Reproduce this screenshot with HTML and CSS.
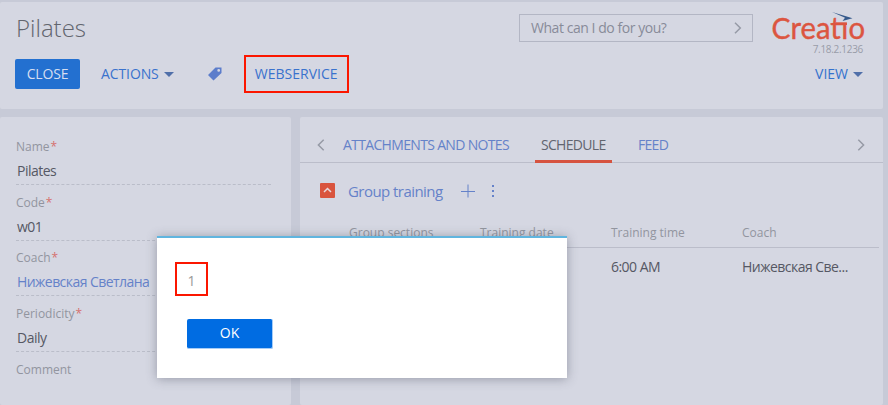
FILE: index.html
```html
<!DOCTYPE html>
<html lang="en">
<head>
<meta charset="utf-8">
<title>Pilates</title>
<link rel="stylesheet" href="styles.css">
</head>
<body>
<header class="header panel">
  <div class="header-main">
    <h1>Pilates</h1>
    <div class="toolbar">
      <button class="close">CLOSE</button>
      <a class="action actions"><span>ACTIONS</span><i class="caret"></i></a>
      <svg class="tag" width="14" height="14" viewBox="0 0 14 14"><path fill-rule="evenodd" d="M7.5 0.5H13.5V6L5.5 13.6L0 8Z M10.7 2A1.4 1.4 0 1 0 10.7 4.8A1.4 1.4 0 1 0 10.7 2Z"/></svg>
      <a class="webservice"><span>WEBSERVICE</span></a>
    </div>
  </div>
  <div class="search"><span>What can I do for you?</span><svg width="8" height="12" viewBox="0 0 8 12"><path d="M1 .7L6.3 6L1 11.3"/></svg></div>
  <div class="brand">
    <svg class="logo" width="96" height="32" viewBox="0 0 96 32"><text x="1.5" y="28.7" textLength="93.5" lengthAdjust="spacingAndGlyphs">C<tspan class="lower">reatıo</tspan></text><path class="bar" d="M66 13.7H77"/><path class="arrow" d="M62 2L82.5 8.3L72.5 11L75 7.8Z"/></svg>
    <span class="version">7.18.2.1236</span>
    <a class="action view"><span>VIEW</span><i class="caret"></i></a>
  </div>
</header>
<main>
  <section class="fields panel">
    <div class="field"><label><span>Name</span><b>*</b></label><p><span>Pilates</span></p></div>
    <div class="field"><label><span>Code</span><b>*</b></label><p><span>w01</span></p></div>
    <div class="field"><label><span>Coach</span><b>*</b></label><p class="link"><span>Нижевская Светлана</span></p></div>
    <div class="field"><label><span>Periodicity</span><b>*</b></label><p><span>Daily</span></p></div>
    <div class="field"><label><span>Comment</span></label></div>
  </section>
  <section class="details panel">
    <nav>
      <svg class="prev" width="8" height="12" viewBox="0 0 8 12"><path d="M6.7 .7L1.4 6L6.7 11.3"/></svg>
      <a class="tab attachments">ATTACHMENTS AND NOTES</a>
      <a class="tab active">SCHEDULE</a>
      <a class="tab">FEED</a>
      <svg class="next" width="8" height="12" viewBox="0 0 8 12"><path d="M1.3 .7L6.6 6L1.3 11.3"/></svg>
    </nav>
    <div class="group">
      <svg class="toggle" width="15" height="15" viewBox="0 0 15 15"><rect width="15" height="15" rx="1"/><path d="M4 9L7.5 5.5L11 9"/></svg>
      <h2>Group training</h2>
      <svg class="plus" width="14" height="14" viewBox="0 0 14 14"><path d="M0 7.5H14M7 .5V13.5"/></svg>
      <svg class="dots" width="4" height="14" viewBox="0 0 4 14"><path d="M1 1h2v2H1zM1 6h2v2H1zM1 11h2v2H1z"/></svg>
    </div>
    <div class="row head"><span>Group sections</span><span>Training date</span><span>Training time</span><span>Coach</span></div>
    <div class="row"><span></span><span></span><span>6:00 AM</span><span>Нижевская Све...</span></div>
  </section>
</main>
<div class="dialog">
  <div class="message"><span>1</span></div>
  <button class="ok">OK</button>
</div>
</body>
</html>
```

FILE: styles.css
```css
* { box-sizing: border-box; }
body {
  margin: 0;
  width: 888px;
  height: 405px;
  overflow: hidden;
  padding-top: 2px;
  background: #c7cad7;
  font: 14px/20px "Open Sans", sans-serif;
  color: #555864;
}
h1, h2, p { margin: 0; font-weight: 400; }
button { border: 0; padding: 0; font: inherit; }
.panel { background: #d5d7e2; border-radius: 2px; }

.header { display: flex; width: 883px; height: 107px; }
.header-main { width: 519px; padding-left: 15px; }
h1 { height: 57px; padding: 9px 0 0 1px; font-size: 24px; line-height: 34px; font-weight: 300; color: #62656e; }
.toolbar { display: flex; align-items: center; height: 30px; color: #3a72cd; }
.close { width: 65px; height: 30px; border-radius: 2px; background: #2370d0; color: #d5def0; letter-spacing: -.15px; }
.action { display: flex; align-items: center; }
.actions { margin-left: 21px; gap: 5px; letter-spacing: -.1px; }
.caret { border: 5px solid transparent; border-top-color: #506fa9; border-bottom: 0; }
.tag { margin-left: 34px; fill: #5c7dcb; }
.webservice { display: flex; align-items: center; justify-content: center; width: 105px; height: 38px; margin-left: 22px; border: 2px solid #fb1600; }

.search { display: flex; align-items: center; justify-content: space-between; width: 234px; height: 28px; margin-top: 12px; padding: 0 10px 0 11px; border: 1px solid #b3b6c4; color: #888b99; letter-spacing: -.45px; }
.search svg, nav svg { fill: none; stroke: #969aa6; stroke-width: 1.5; }
.brand { display: flex; flex-direction: column; align-items: flex-end; width: 113px; padding-top: 8px; }
.logo { overflow: visible; }
.logo text { font: 29px Lato, sans-serif; fill: #dc5540; stroke: #dc5540; stroke-width: .4; }
.logo .lower { font-size: 30px; }
.logo .bar { stroke: #dc5540; stroke-width: 2.6; }
.logo .arrow { fill: #365a8c; }
.version { height: 14px; margin: 0 3px 0 0; font-size: 10px; line-height: 14px; color: #999ca8; letter-spacing: -.3px; }
.view { margin: 8px 3px 0 0; gap: 5px; color: #3472cd; }

main { display: flex; gap: 9px; width: 883px; height: 288px; margin-top: 8px; }
.fields { width: 291px; padding: 19px 20px 0 16px; }
.field { height: 55.7px; }
.field label { display: flex; height: 21px; font-size: 12px; line-height: 21px; color: #92959f; }
.field b { margin-left: 1px; font-weight: 400; color: #d5716e; }
.field p { height: 28px; padding: 4px 0 0 1px; border-bottom: 1px dashed #babdc9; letter-spacing: -.5px; }
.field .link { color: #6582c9; letter-spacing: -.56px; }

.details { width: 583px; }
nav { display: flex; align-items: center; height: 46px; padding: 10px 18px 0 17px; border-bottom: 1px solid #bbbdca; }
.tab { height: 36px; line-height: 36px; padding: 0 6px; margin-right: 20px; color: #6582c9; letter-spacing: -.67px; }
.attachments { margin-left: 12px; }
.active { color: #62656f; border-bottom: 3px solid #d65340; margin-bottom: -1px; width: 77px; }
.next { margin-left: auto; }
.group { display: flex; align-items: center; height: 55px; margin-bottom: 1px; padding-left: 20px; color: #6582c9; }
.toggle { fill: #d9543e; }
.toggle path { fill: none; stroke: #e9d9dc; stroke-width: 1.5; }
h2 { width: 95px; margin-left: 13px; font-size: 15px; line-height: 20px; letter-spacing: -.55px; white-space: nowrap; }
.plus { margin-left: 18px; stroke: #6582c9; }
.dots { margin-left: 16px; fill: #6582c9; }
.row { display: grid; grid-template-columns: 131px 131px 131px 1fr; height: 39px; margin: 0 4px 0 49px; line-height: 38px; letter-spacing: -.53px; }
.head { height: 29px; border-bottom: 1px solid #bbbdca; font-size: 12px; line-height: 28px; color: #92959f; letter-spacing: 0; }

.dialog { position: absolute; left: 157px; top: 236px; width: 410px; height: 142px; padding: 24px 18px; border-top: 2px solid #60b5df; background: #fff; box-shadow: 0 1px 10px rgba(65,70,88,.42); }
.message { display: flex; align-items: center; justify-content: center; width: 33px; height: 34px; border: 2px solid #fb1600; color: #999; padding-top: 3px; }
.ok { display: block; width: 86px; height: 30px; margin: 23px 0 0 12px; padding-bottom: 1px; border: 1px solid #a5ccf7; border-width: 0 1px 1px 0; border-radius: 2px; background: #006ce2; color: #fff; }
```
